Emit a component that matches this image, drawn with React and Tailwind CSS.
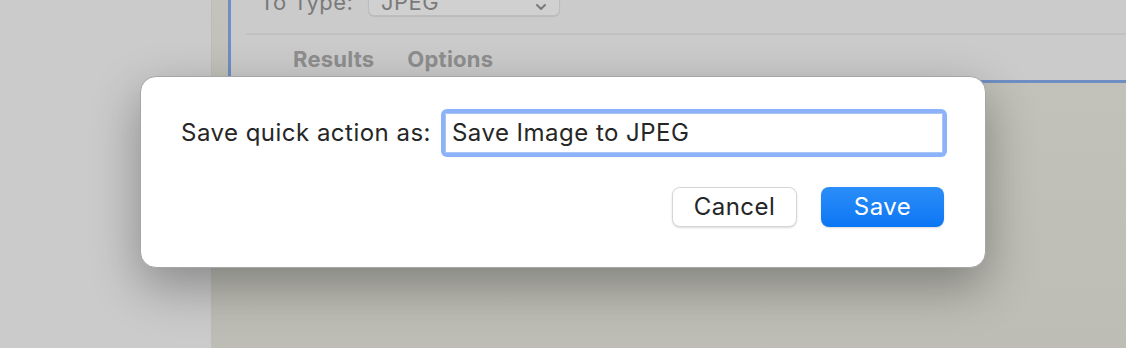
export default function App() {
  return (
    <div className="relative w-[1126px] h-[348px] overflow-hidden flex font-['Inter',sans-serif]">
      {/* left sidebar area */}
      <div className="w-[212px] shrink-0 bg-[#cbcbcb] border-r border-[#bcbcbc]" />
      {/* right area */}
      <div className="flex-1 bg-gradient-to-b from-[#c3c3bb] to-[#bdbdb5] pl-[16px]">
        <div className="h-[83px] bg-[#cbcbcb] border-l-[3px] border-b-[3px] border-[#6f8fc4] overflow-hidden">
          <div className="flex items-center h-[28px] mt-[-12px] pl-[29px]">
            <span className="text-[22px] tracking-[0.02em] text-[#7a7a7a] w-[108px]">To Type:</span>
            <div className="flex items-center justify-between w-[192px] h-[28px] rounded-[6px] bg-[#d0d0d0] border border-[#bdbdbd] shadow-[0_1px_1px_rgba(0,0,0,0.08)] px-[12px]">
              <span className="text-[22px] tracking-[0.02em] text-[#7a7a7a]">JPEG</span>
              <svg width="12" height="16" viewBox="0 0 12 16" fill="none" stroke="#7a7a7a" strokeWidth="2" strokeLinecap="round" strokeLinejoin="round">
                <path d="M2 5l4-4 4 4" />
                <path d="M2 11l4 4 4-4" />
              </svg>
            </div>
          </div>
          <div className="ml-[15px] mt-[17px] h-[2px] bg-[#c2c2c2]" />
          <div className="flex gap-[33px] pl-[62px] mt-[12px]">
            <span className="text-[22px] tracking-[0.01em] font-bold text-[#8e8e8e] leading-[24px]">Results</span>
            <span className="text-[22px] tracking-[0.01em] font-bold text-[#8e8e8e] leading-[24px]">Options</span>
          </div>
        </div>
      </div>

      {/* sheet dialog */}
      <div className="absolute left-[140px] top-[76px] w-[846px] h-[192px] bg-white rounded-[16px] border border-[#a6a6a6] shadow-[0_18px_50px_rgba(0,0,0,0.33)] px-[40px] pt-[32px]">
        <div className="flex items-center">
          <span className="text-[24px] tracking-[0.02em] text-[#262626] mr-[10px]">Save quick action as:</span>
          <div className="flex-1 h-[48px] rounded-[6px] bg-[#8cb2f9] p-[4px] mr-[-2px]">
            <div className="h-full bg-white border border-[#a9c4f5] flex items-center pl-[6px]">
              <span className="text-[24px] tracking-[0.02em] text-[#262626]">Save Image to JPEG</span>
            </div>
          </div>
        </div>
        <div className="flex justify-end gap-[24px] mt-[30px] pr-[1px]">
          <button className="w-[125px] h-[40px] rounded-[8px] bg-white border border-[#d6d6d6] shadow-[0_1px_2px_rgba(0,0,0,0.15)] text-[24px] tracking-[0.02em] text-[#262626]">
            Cancel
          </button>
          <button className="w-[123px] h-[40px] rounded-[8px] bg-gradient-to-b from-[#2a8df8] to-[#0a76f4] shadow-[0_1px_2px_rgba(0,0,0,0.15)] text-[24px] tracking-[0.02em] text-white">
            Save
          </button>
        </div>
      </div>
    </div>
  );
}
